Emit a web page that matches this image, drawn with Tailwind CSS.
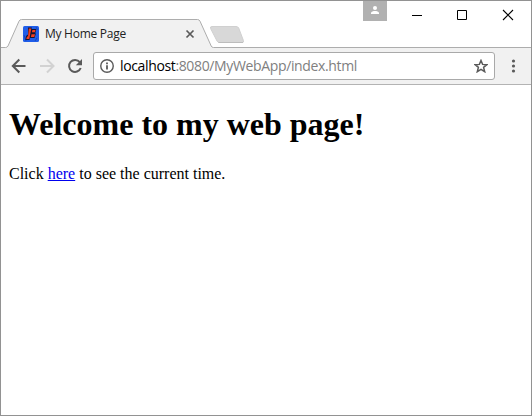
<!DOCTYPE html>
<html lang="en">
<head>
<meta charset="utf-8">
<title>My Home Page</title>
<script src="https://cdn.jsdelivr.net/npm/@tailwindcss/browser@4"></script>
</head>
<body class="bg-white">
<div class="flex h-[416px] w-[532px] flex-col overflow-hidden border border-[#929292] bg-white">
  <header class="relative flex h-[46px] shrink-0 items-start">
    <svg class="absolute left-0 top-0" width="530" height="47" viewBox="1 1 530 47" fill="none">
      <path d="M1 48V47.5H5.5Q7.3 47.5 8 46L19 21.2Q19.8 19.5 21.5 19.5H197.5Q199.2 19.5 200 21.2L211.2 46Q211.8 47.5 213.5 47.5H531V48Z" fill="#f1f1f1"/>
      <path d="M1 47.500H5.500Q7.300 47.500 8 46L19 21.200Q19.800 19.500 21.500 19.500H197.500Q199.200 19.500 200 21.200L211.200 46Q211.800 47.500 213.500 47.500H531" stroke="#adadad"/>
      <path d="M212 26.500H236Q238 26.500 238.700 28L243.400 40.500Q244 42.500 242.500 42.500H219.500Q217.800 42.500 217 41L210.600 28.500Q209.800 26.500 212 26.500Z" fill="#d8d8d8" stroke="#d0d0d0"/>
      <path d="M218.500 42.500H243" stroke="#bdbdbd"/>
    </svg>
    <div class="relative mt-[25px] ml-[22px] flex h-4 w-[172px] items-center">
      <svg width="16" height="16" viewBox="0 0 16 16">
        <rect width="16" height="16" rx="1.500" fill="#1f5de8"/>
        <path d="M1 9L3 15M13 1L14.500 4M14 12L12 15" stroke="#1745bd"/>
        <path d="M5 1.500H9L8.500 3H13.300L12.800 5.500L12.300 7L12.800 8L11.500 12H7L6.500 14H2.300L3 10L5 8.500Z" fill="#141533"/>
        <path d="M5.800 2.500H8.300L6.300 13H3.300L4 10.500H5ZM9.400 4H12.500L12 6.300H8.900ZM8.500 8.200H12L11.300 11H7.900Z" fill="#f04022"/>
      </svg>
      <span class="ml-[6px] whitespace-nowrap font-['Open_Sans','Noto_Sans',sans-serif] text-[12px] leading-4 tracking-[-0.27px] text-[#222]">My Home Page</span>
      <svg class="ml-auto" width="10" height="10" viewBox="0 0 10 10"><path d="M1.500 1.500L8.500 8.500M8.500 1.500L1.500 8.500" stroke="#5a5a5a" stroke-width="1.700"/></svg>
    </div>
    <div class="ml-auto flex items-start">
      <svg width="24" height="20" viewBox="0 0 24 20"><rect width="24" height="20" fill="#b1b1b1"/><circle cx="12" cy="7" r="2" fill="#fff"/><path d="M8 13V11.800C8 10.400 10.500 9.900 12 9.900S16 10.400 16 11.800V13Z" fill="#fff"/></svg>
      <svg class="ml-[24px]" width="120" height="30" viewBox="411 1 120 30" fill="none" stroke="#000">
        <path d="M412 15.500H422M457.500 10.500H466.500V19.500H457.500Z"/>
        <path d="M503 10L513 20M513 10L503 20" stroke-width="1.100"/>
      </svg>
    </div>
  </header>
  <nav class="relative mt-px flex h-[37px] shrink-0 items-center border-b border-[#b3b3b3] bg-[#f1f1f1]">
    <svg class="shrink-0" width="92" height="36" viewBox="1 48 92 36" fill="none">
      <path d="M25.500 66H12.800M19.300 59.500L12.800 66L19.300 72.500" stroke="#5a5a5a" stroke-width="2"/>
      <path d="M40 66H53M47 59.500L53.500 66L47 72.500" stroke="#d2d2d2" stroke-width="2"/>
      <path d="M79.800 62.200A6 6 0 1 0 80.700 68" stroke="#5a5a5a" stroke-width="2"/>
      <path d="M82 59V65.200H75.800Z" fill="#5a5a5a"/>
    </svg>
    <div class="flex h-[28px] w-[402px] shrink-0 items-center rounded-[3px] border border-[#a9a9a9] bg-white pl-[6px] pr-[6px]">
      <svg width="14" height="14" viewBox="0 0 14 14"><circle cx="7" cy="7" r="6.250" fill="none" stroke="#5a5a5a" stroke-width="1.400"/><path d="M6.100 3.500H7.900V5.200H6.100ZM6.100 6.200H7.900V10.500H6.100Z" fill="#5a5a5a"/></svg>
      <span class="ml-[6px] whitespace-nowrap font-['Open_Sans','Noto_Sans',sans-serif] text-[14px] leading-5 tracking-[-0.36px] text-[#808080]"><span class="text-black">localhost</span>:8080/MyWebApp/index.html</span>
      <svg class="ml-auto" width="14" height="14" viewBox="0 0 14 14" fill="none"><path d="M7 1.500L8.600 5.400L12.900 5.700L9.600 8.400L10.700 12.700L7 10.400L3.300 12.700L4.400 8.400L1.100 5.700L5.400 5.400Z" stroke="#5a5a5a" stroke-width="1.500"/></svg>
    </div>
    <svg class="ml-[16px]" width="5" height="14" viewBox="0 0 5 14" fill="#5a5a5a"><circle cx="2.500" cy="2" r="1.600"/><circle cx="2.500" cy="7" r="1.600"/><circle cx="2.500" cy="12" r="1.600"/></svg>
  </nav>
  <main class="px-2 font-['Liberation_Serif','Times_New_Roman',serif] text-black">
    <h1 class="mt-[21px] text-[32px] leading-[37px] font-bold">Welcome to my web page!</h1>
    <p class="mt-[22px] text-[16px] leading-[18px]">Click <a href="#" class="text-[#0000ee] underline">here</a> to see the current time.</p>
  </main>
</div>
</body>
</html>
